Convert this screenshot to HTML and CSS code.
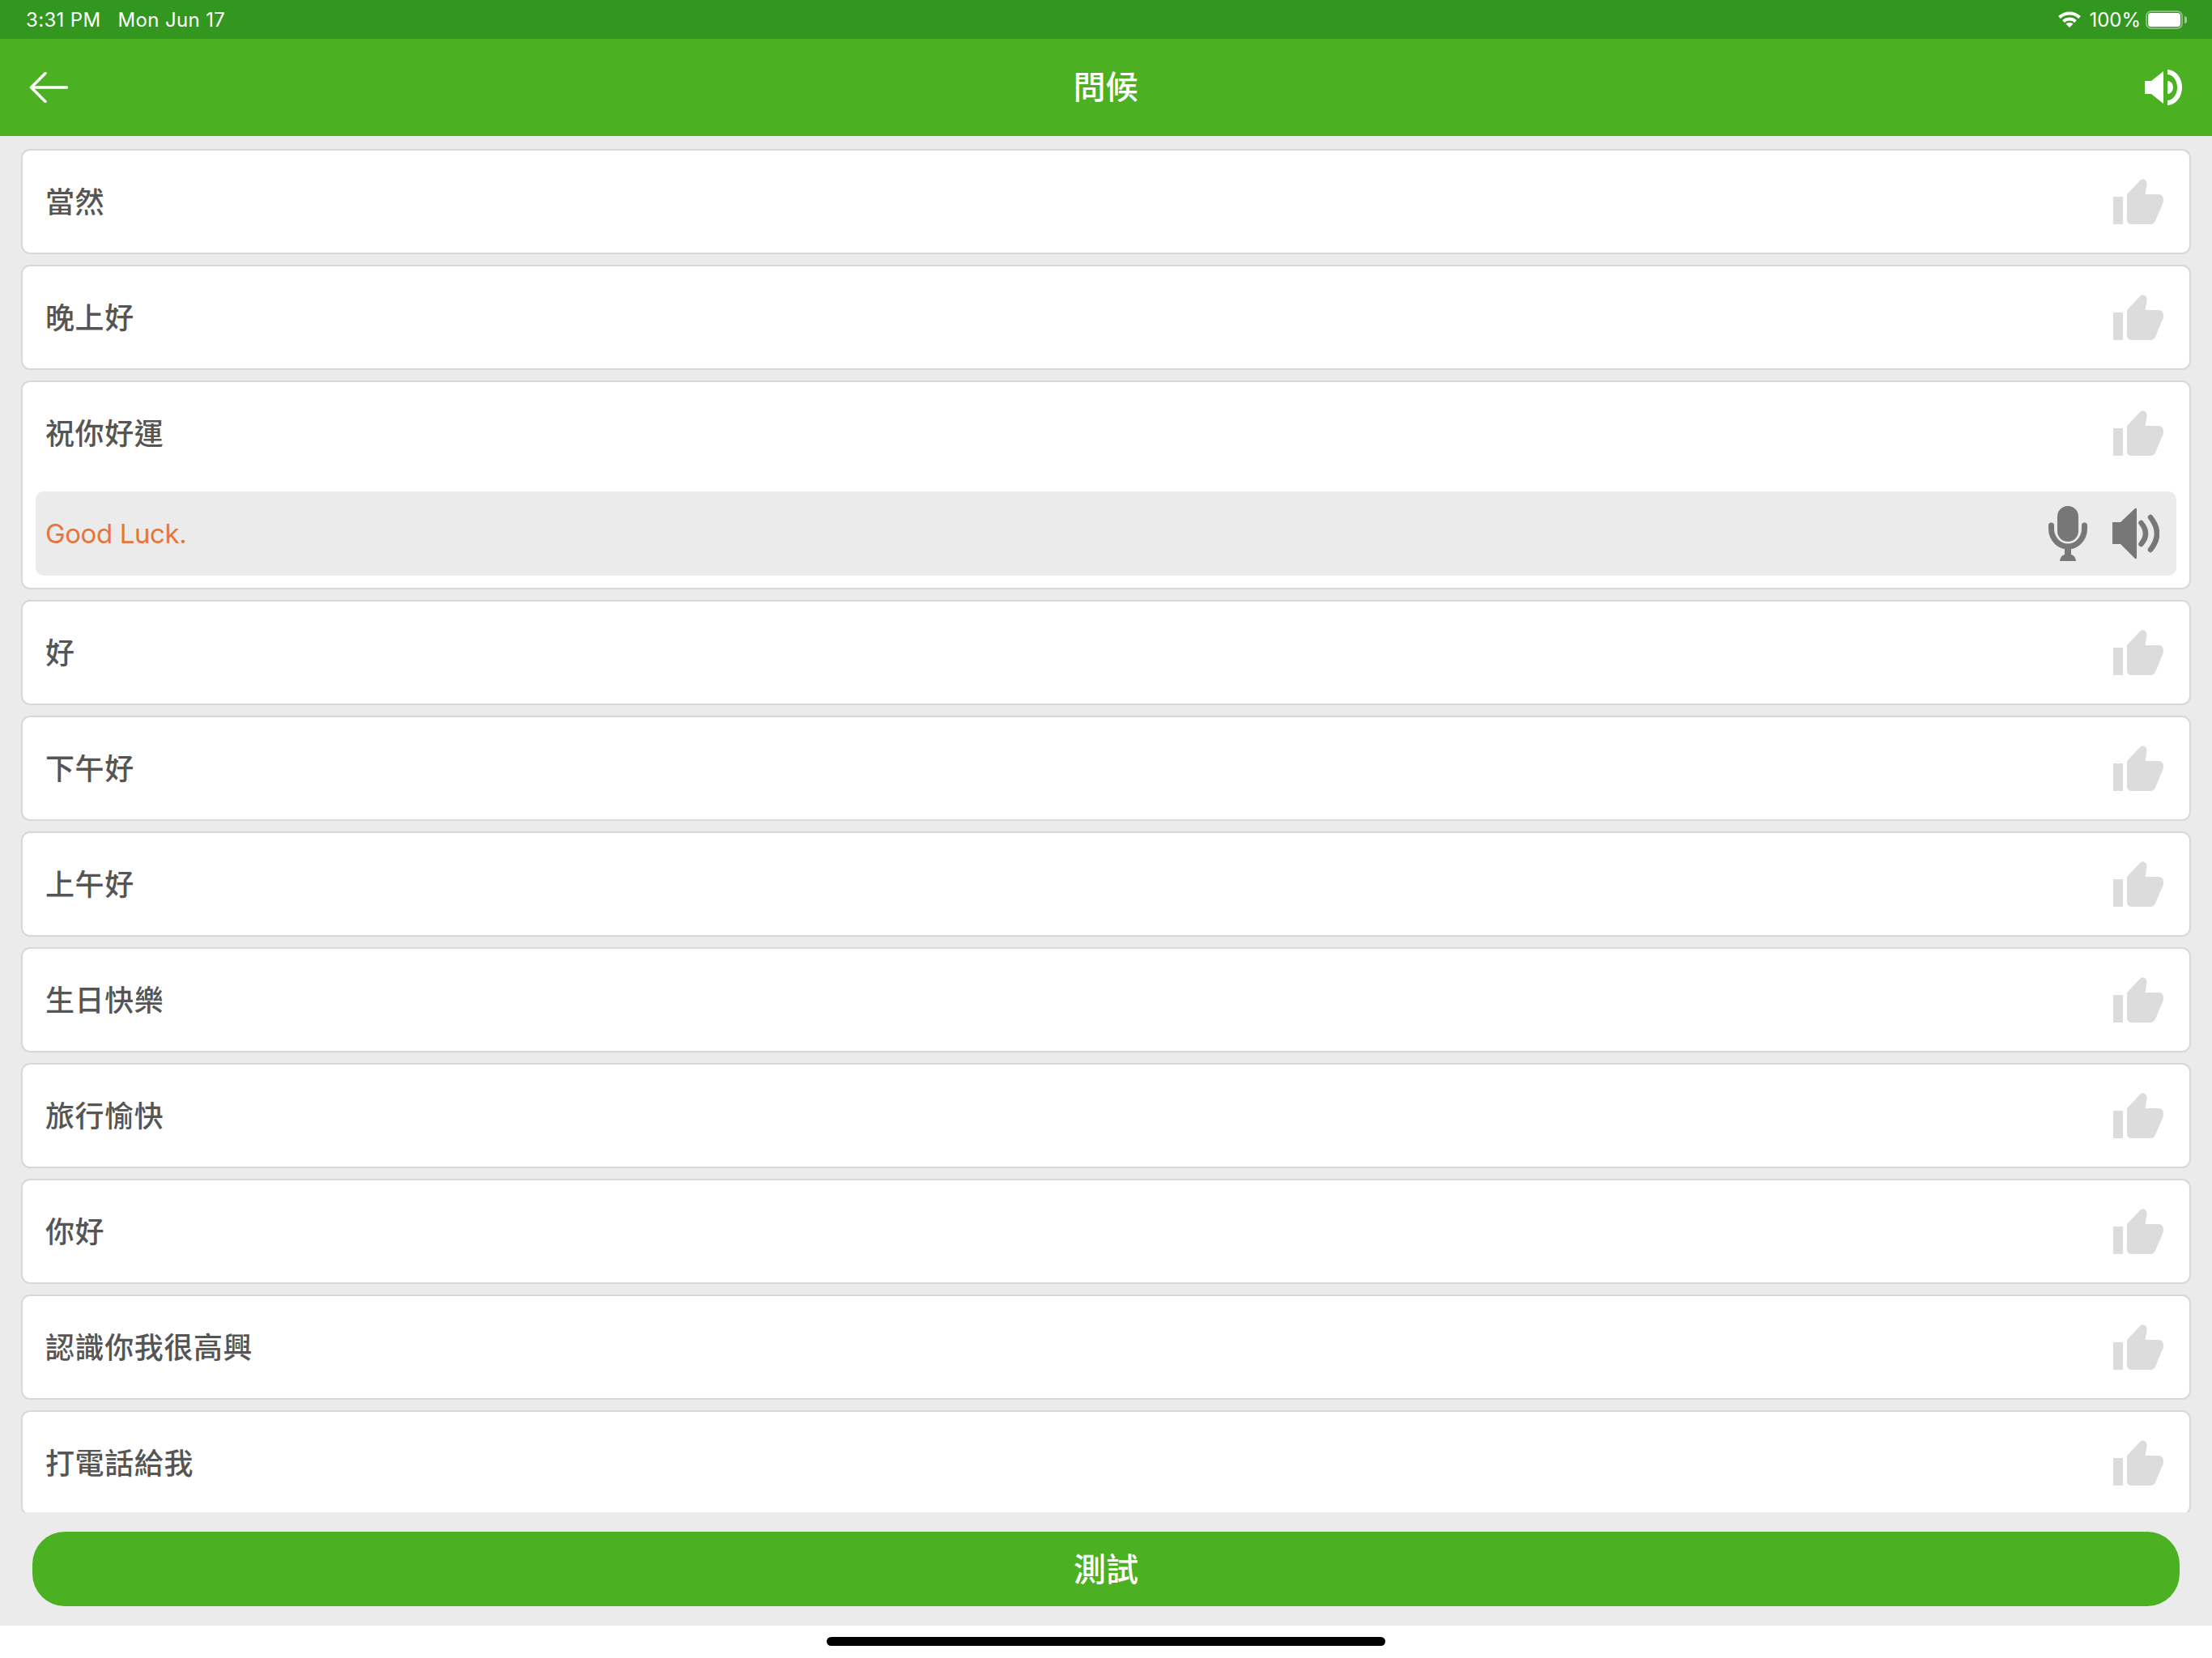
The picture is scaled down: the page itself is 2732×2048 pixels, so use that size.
FILE: index.html
```html
<!DOCTYPE html>
<html lang="zh-Hant">
<head>
  <meta charset="UTF-8" />
  <title>問候</title>
  <link rel="stylesheet" href="styles.css">
</head>
<body>
  <svg class="sprites" width="0" height="0">
    <symbol id="thumb" viewBox="0 0 62 56">
      <rect x="0" y="22" width="12" height="34" />
      <path d="M17 19 L33 2 Q36 -1 39 1 Q42 3 41.5 7 L39.5 19 H56 Q62 19 62 26 Q62 30 60 33 L52 52 Q50 56 46 56 H23 Q17 56 17 50 Z" />
    </symbol>
  </svg>

  <div class="app">
    <div class="status-bar">
      <div class="status-left">
        <span>3:31 PM</span>
        <span>Mon Jun 17</span>
      </div>
      <div class="status-right">
        <svg class="wifi" viewBox="0 0 28 20">
          <path d="M1.5 7.5 A18 18 0 0 1 26.5 7.5" />
          <path d="M6.5 12.5 A11 11 0 0 1 21.5 12.5" />
          <path class="wifi-dot" d="M14 20 L9.5 15.5 A6.5 6.5 0 0 1 18.5 15.5 Z" />
        </svg>
        <span class="battery-pct">100%</span>
        <div class="battery">
          <div class="battery-level"></div>
        </div>
      </div>
    </div>

    <div class="header">
      <svg class="back-icon" viewBox="0 0 48 38">
        <path d="M46.5 19 H2.5 M20 1.5 L2.5 19 L20 36.5" />
      </svg>
      <div class="title">問候</div>
      <svg class="header-sound" viewBox="0 0 46 44">
        <path d="M0 14 H8 L23 2 V42 L8 30 H0 Z" />
        <path d="M28 0 A18 22 0 0 1 28 44 V38 A12 16 0 0 0 28 6 Z" />
        <path d="M28 14 A7 8 0 0 1 28 30 Z" />
      </svg>
    </div>

    <div class="list">
      <div class="card">
        <div class="row"><span>當然</span><svg class="thumb"><use href="#thumb" /></svg></div>
      </div>
      <div class="card">
        <div class="row"><span>晚上好</span><svg class="thumb"><use href="#thumb" /></svg></div>
      </div>
      <div class="card">
        <div class="row"><span>祝你好運</span><svg class="thumb"><use href="#thumb" /></svg></div>
        <div class="answer">
          <span class="answer-text">Good Luck.</span>
          <svg class="mic-icon" viewBox="0 0 48 68">
            <rect x="11" y="0" width="26" height="44" rx="13" />
            <path class="mic-cradle" d="M3.5 24 V28 A20.5 22 0 0 0 44.5 28 V24" />
            <path d="M20 52 H28 V60 Q33 61 34 68 H14 Q15 61 20 60 Z" />
          </svg>
          <svg class="sound-icon" viewBox="0 0 58 64">
            <path d="M0 18 H10 L28 1 Q30 0 30 2 V62 Q30 64 28 63 L10 45 H0 Z" />
            <path class="wave" d="M35.5 19 Q46.5 32 35.5 45" />
            <path class="wave" d="M47 12 Q63 32 47 52" />
          </svg>
        </div>
      </div>
      <div class="card">
        <div class="row"><span>好</span><svg class="thumb"><use href="#thumb" /></svg></div>
      </div>
      <div class="card">
        <div class="row"><span>下午好</span><svg class="thumb"><use href="#thumb" /></svg></div>
      </div>
      <div class="card">
        <div class="row"><span>上午好</span><svg class="thumb"><use href="#thumb" /></svg></div>
      </div>
      <div class="card">
        <div class="row"><span>生日快樂</span><svg class="thumb"><use href="#thumb" /></svg></div>
      </div>
      <div class="card">
        <div class="row"><span>旅行愉快</span><svg class="thumb"><use href="#thumb" /></svg></div>
      </div>
      <div class="card">
        <div class="row"><span>你好</span><svg class="thumb"><use href="#thumb" /></svg></div>
      </div>
      <div class="card">
        <div class="row"><span>認識你我很高興</span><svg class="thumb"><use href="#thumb" /></svg></div>
      </div>
      <div class="card">
        <div class="row"><span>打電話給我</span><svg class="thumb"><use href="#thumb" /></svg></div>
      </div>
    </div>

    <div class="footer">
      <button class="test-btn">測試</button>
    </div>

    <div class="home-area">
      <div class="home-bar"></div>
    </div>
  </div>
</body>
</html>
```

FILE: styles.css
```css
* {
  box-sizing: border-box;
}

body {
  margin: 0;
  background: #fff;
  font-family: Inter, "Noto Sans CJK TC", sans-serif;
}

.sprites {
  display: block;
  height: 0;
}

.app {
  width: 2732px;
  height: 2048px;
  display: flex;
  flex-direction: column;
  overflow: hidden;
  background: #ebebeb;
}

.status-bar {
  height: 48px;
  flex-shrink: 0;
  display: flex;
  align-items: center;
  justify-content: space-between;
  padding: 0 36px 0 32px;
  background: #33961f;
  color: #fff;
  font-size: 24px;
  letter-spacing: 0.35px;
}

.status-left {
  display: flex;
  gap: 21px;
}

.status-right {
  display: flex;
  align-items: center;
  gap: 6px;
}

.wifi {
  width: 28px;
  height: 20px;
  margin-right: 4px;
}

.wifi path {
  fill: none;
  stroke: #fff;
  stroke-width: 4;
}

.wifi .wifi-dot {
  fill: #fff;
  stroke: none;
}

.battery-pct {
  letter-spacing: 0;
}

.battery {
  position: relative;
  width: 46px;
  height: 23px;
  padding: 1px;
  border: 2px solid rgba(255, 255, 255, 0.4);
  border-radius: 7px;
}

.battery::after {
  content: "";
  position: absolute;
  right: -7px;
  top: 5px;
  width: 3px;
  height: 9px;
  background: rgba(255, 255, 255, 0.5);
  border-radius: 0 3px 3px 0;
}

.battery-level {
  height: 100%;
  background: #fff;
  border-radius: 4px;
}

.header {
  height: 120px;
  flex-shrink: 0;
  display: grid;
  grid-template-columns: 1fr auto 1fr;
  align-items: center;
  padding: 0 37px 0 36px;
  background: #4bb022;
  color: #fff;
}

.back-icon {
  width: 48px;
  height: 38px;
}

.back-icon path {
  fill: none;
  stroke: #fff;
  stroke-width: 3.5;
  stroke-linecap: round;
  stroke-linejoin: round;
}

.title {
  font-family: "Noto Sans CJK TC", sans-serif;
  font-size: 40px;
  font-weight: 500;
  line-height: 48px;
  padding-bottom: 6px;
}

.header-sound {
  width: 46px;
  height: 44px;
  justify-self: end;
  fill: #fff;
}

.list {
  flex: 1;
  min-height: 0;
  overflow: hidden;
  display: flex;
  flex-direction: column;
  gap: 13px;
  padding: 16px 26px 0 26px;
}

.card {
  flex-shrink: 0;
  background: #fff;
  border: 2px solid #d8d8d8;
  border-radius: 11px;
}

.row {
  height: 126px;
  display: flex;
  align-items: center;
  justify-content: space-between;
  padding: 0 32px 0 28px;
  font-family: "Noto Sans CJK TC", sans-serif;
  font-size: 36px;
  font-weight: 500;
  letter-spacing: 0.6px;
  color: #555;
}

.row span {
  padding-bottom: 4px;
}

.thumb {
  width: 62px;
  height: 56px;
  fill: #dcdcdc;
}

.answer {
  height: 104px;
  display: flex;
  align-items: center;
  gap: 31px;
  margin: 9px 16px 15px 16px;
  padding: 0 21px 0 12px;
  background: #ebebeb;
  border-radius: 10px;
}

.answer-text {
  flex: 1;
  font-size: 33px;
  letter-spacing: -0.4px;
  color: #e8743b;
}

.mic-icon {
  width: 48px;
  height: 68px;
  fill: #777;
}

.mic-cradle {
  fill: none;
  stroke: #777;
  stroke-width: 7;
  stroke-linecap: round;
}

.sound-icon {
  width: 58px;
  height: 64px;
  fill: #777;
}

.wave {
  fill: none;
  stroke: #777;
  stroke-width: 6.5;
  stroke-linecap: round;
}

.footer {
  height: 140px;
  flex-shrink: 0;
  padding: 24px 40px;
}

.test-btn {
  display: block;
  width: 100%;
  height: 92px;
  padding: 0 0 4px;
  border: none;
  border-radius: 40px;
  background: #4bb022;
  color: #fff;
  font-family: "Noto Sans CJK TC", sans-serif;
  font-size: 40px;
  font-weight: 500;
}

.home-area {
  height: 40px;
  flex-shrink: 0;
  display: flex;
  justify-content: center;
  padding-top: 14px;
  background: #fff;
}

.home-bar {
  width: 690px;
  height: 11px;
  background: #000;
  border-radius: 6px;
}
```
